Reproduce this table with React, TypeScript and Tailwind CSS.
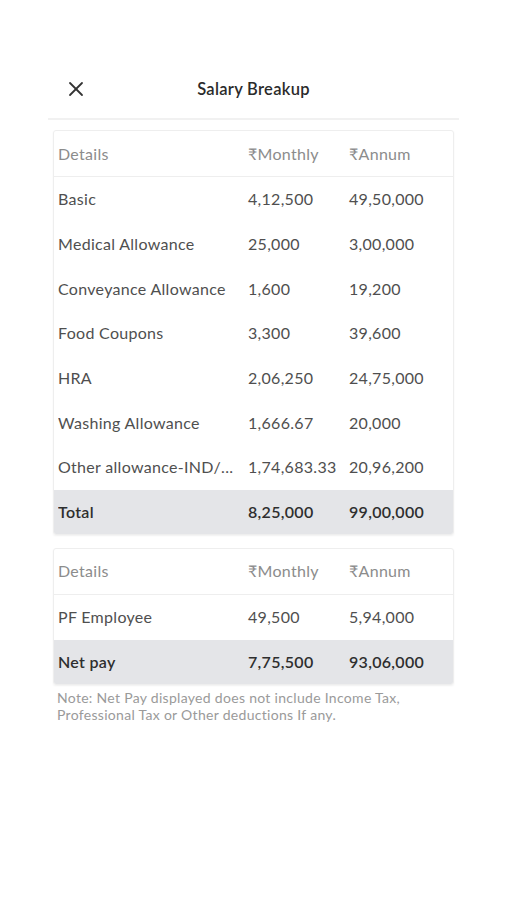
import { X } from "lucide-react";

type Row = { label: string; monthly: string; annum: string };

const earnings: Row[] = [
  { label: "Basic", monthly: "4,12,500", annum: "49,50,000" },
  { label: "Medical Allowance", monthly: "25,000", annum: "3,00,000" },
  { label: "Conveyance Allowance", monthly: "1,600", annum: "19,200" },
  { label: "Food Coupons", monthly: "3,300", annum: "39,600" },
  { label: "HRA", monthly: "2,06,250", annum: "24,75,000" },
  { label: "Washing Allowance", monthly: "1,666.67", annum: "20,000" },
  { label: "Other allowance-IND/...", monthly: "1,74,683.33", annum: "20,96,200" },
];

const deductions: Row[] = [{ label: "PF Employee", monthly: "49,500", annum: "5,94,000" }];

function HeaderRow() {
  return (
    <div className="grid h-[46px] grid-cols-[190px_101px_1fr] items-center border-b border-[#eeeeee] px-[4px] text-[#8c8c8c]">
      <span>Details</span>
      <span>₹Monthly</span>
      <span>₹Annum</span>
    </div>
  );
}

function DataRow({ row, total }: { row: Row; total?: boolean }) {
  return (
    <div
      className={
        total
          ? "grid h-[44px] grid-cols-[190px_101px_1fr] items-center bg-[#e4e5e8] px-[4px] font-semibold text-[#2e2e2e]"
          : "grid h-[44.7px] grid-cols-[190px_101px_1fr] items-center px-[4px] text-[#4f4f4f]"
      }
    >
      <span className="truncate">{row.label}</span>
      <span>{row.monthly}</span>
      <span>{row.annum}</span>
    </div>
  );
}

export default function App() {
  return (
    <div className="min-h-[900px] bg-white font-['Lato',sans-serif] text-[16px] tracking-[0.3px]">
      <div className="px-[48px] pt-[70px]">
        <div className="relative flex h-[50px] items-start justify-center border-b-2 border-[#f1f1f1] pt-[7px]">
          <X className="absolute left-[16px] top-[7px] h-[24px] w-[24px] text-[#333]" strokeWidth={1.8} />
          <span className="text-[16.5px] font-semibold text-[#2b2b2b]">Salary Breakup</span>
        </div>
      </div>
      <div className="mx-[53px] mt-[10px] flex flex-col gap-[13px]">
        <div className="overflow-hidden rounded-[3px] border border-[#eeeeee] shadow-[0_1px_2px_rgba(0,0,0,0.06)]">
          <HeaderRow />
          {earnings.map((r) => (
            <DataRow key={r.label} row={r} />
          ))}
          <DataRow row={{ label: "Total", monthly: "8,25,000", annum: "99,00,000" }} total />
        </div>
        <div>
          <div className="overflow-hidden rounded-[3px] border border-[#eeeeee] shadow-[0_1px_2px_rgba(0,0,0,0.06)]">
            <HeaderRow />
            {deductions.map((r) => (
              <DataRow key={r.label} row={r} />
            ))}
            <DataRow row={{ label: "Net pay", monthly: "7,75,500", annum: "93,06,000" }} total />
          </div>
          <p className="mt-[4px] px-[4px] text-[14px] leading-[17px] text-[#9a9a9a]">
            Note: Net Pay displayed does not include Income Tax,
            <br />
            Professional Tax or Other deductions If any.
          </p>
        </div>
      </div>
    </div>
  );
}
